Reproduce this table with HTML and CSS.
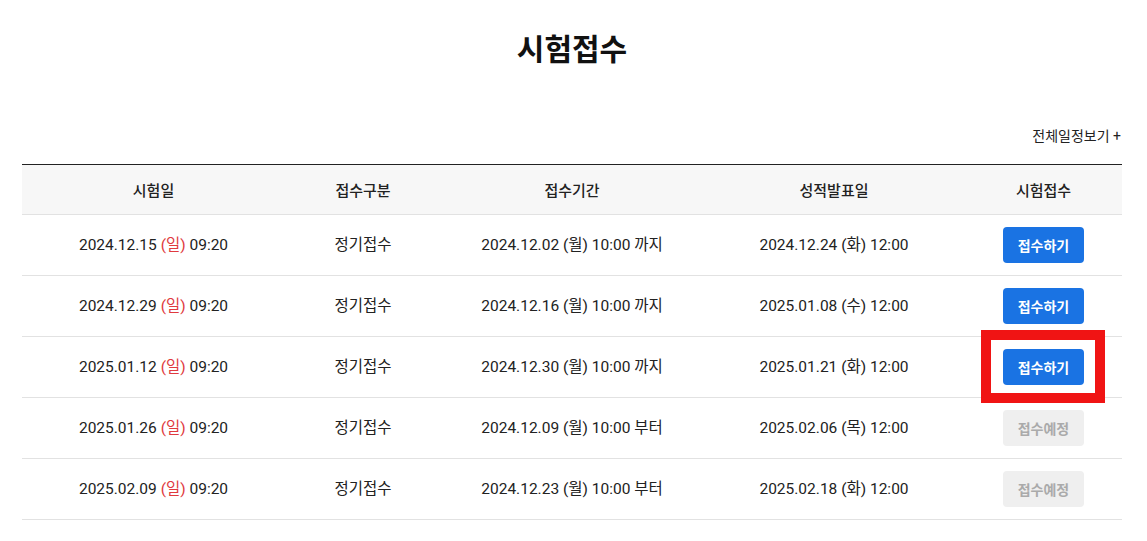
FILE: index.html
```html
<!DOCTYPE html>
<html lang="ko">
<head>
  <meta charset="UTF-8" />
  <meta name="viewport" content="width=device-width, initial-scale=1.0"/>
  <title>시험접수</title>
  <link rel="stylesheet" href="styles.css">
</head>
<body>
  <main class="page">
    <h1 class="title">시험접수</h1>

    <div class="toolbar">
      <a class="all-link" href="#">전체일정보기 +</a>
    </div>

    <table class="schedule">
      <thead>
        <tr>
          <th class="col-date">시험일</th>
          <th class="col-type">접수구분</th>
          <th class="col-period">접수기간</th>
          <th class="col-result">성적발표일</th>
          <th class="col-apply">시험접수</th>
        </tr>
      </thead>
      <tbody>
        <tr>
          <td>2024.12.15 <span class="sun">(일)</span> 09:20</td>
          <td>정기접수</td>
          <td>2024.12.02 (월) 10:00 까지</td>
          <td>2024.12.24 (화) 12:00</td>
          <td><button class="btn btn-apply">접수하기</button></td>
        </tr>
        <tr>
          <td>2024.12.29 <span class="sun">(일)</span> 09:20</td>
          <td>정기접수</td>
          <td>2024.12.16 (월) 10:00 까지</td>
          <td>2025.01.08 (수) 12:00</td>
          <td><button class="btn btn-apply">접수하기</button></td>
        </tr>
        <tr>
          <td>2025.01.12 <span class="sun">(일)</span> 09:20</td>
          <td>정기접수</td>
          <td>2024.12.30 (월) 10:00 까지</td>
          <td>2025.01.21 (화) 12:00</td>
          <td class="marked"><button class="btn btn-apply">접수하기</button><span class="highlight"></span></td>
        </tr>
        <tr>
          <td>2025.01.26 <span class="sun">(일)</span> 09:20</td>
          <td>정기접수</td>
          <td>2024.12.09 (월) 10:00 부터</td>
          <td>2025.02.06 (목) 12:00</td>
          <td><button class="btn btn-soon" disabled>접수예정</button></td>
        </tr>
        <tr>
          <td>2025.02.09 <span class="sun">(일)</span> 09:20</td>
          <td>정기접수</td>
          <td>2024.12.23 (월) 10:00 부터</td>
          <td>2025.02.18 (화) 12:00</td>
          <td><button class="btn btn-soon" disabled>접수예정</button></td>
        </tr>
      </tbody>
    </table>
  </main>
</body>
</html>
```

FILE: styles.css
```css
body {
  font-family: Roboto, "Noto Sans CJK KR", sans-serif;
  margin: 0;
  padding: 0;
  background-color: #fff;
  color: #222;
}

.page {
  width: 1100px;
  margin-left: 22px;
  padding-top: 26px;
}

.title {
  margin: 0;
  text-align: center;
  font-family: "Noto Sans CJK KR", sans-serif;
  font-size: 30px;
  font-weight: 700;
  line-height: 42px;
  color: #111;
}

.toolbar {
  display: flex;
  justify-content: flex-end;
  margin-top: 53px;
  height: 28px;
  align-items: center;
}

.all-link {
  font-size: 14px;
  color: #222;
  text-decoration: none;
  margin-right: 1px;
}

.schedule {
  width: 100%;
  margin-top: 15px;
  border-collapse: collapse;
  border-top: 1px solid #222;
  table-layout: fixed;
  font-size: 15.5px;
}

.col-date {
  width: 263px;
}

.col-type {
  width: 156px;
}

.col-period,
.col-result {
  width: 262px;
}

.col-apply {
  width: 157px;
}

.schedule th {
  height: 49px;
  background-color: #f7f7f7;
  font-size: 15px;
  font-weight: 500;
  border-bottom: 1px solid #e2e2e2;
  padding: 0;
}

.schedule td {
  height: 56px;
  text-align: center;
  border-bottom: 1px solid #e2e2e2;
  padding: 0 0 4px;
}

.sun {
  color: #e03a3e;
}

.btn {
  width: 81px;
  height: 36px;
  margin-top: 4px;
  border: none;
  border-radius: 4px;
  font-family: inherit;
  font-size: 14px;
  font-weight: 600;
  cursor: pointer;
}

.btn-apply {
  background-color: #1a73e3;
  color: #fff;
}

.btn-soon {
  background-color: #efefef;
  color: #aaa;
  cursor: default;
}

/* red marker box drawn over the third button */
.marked {
  position: relative;
}

.highlight {
  position: absolute;
  top: -7px;
  left: 16px;
  width: 104px;
  height: 53px;
  border: 10px solid #f01414;
  pointer-events: none;
}
```
